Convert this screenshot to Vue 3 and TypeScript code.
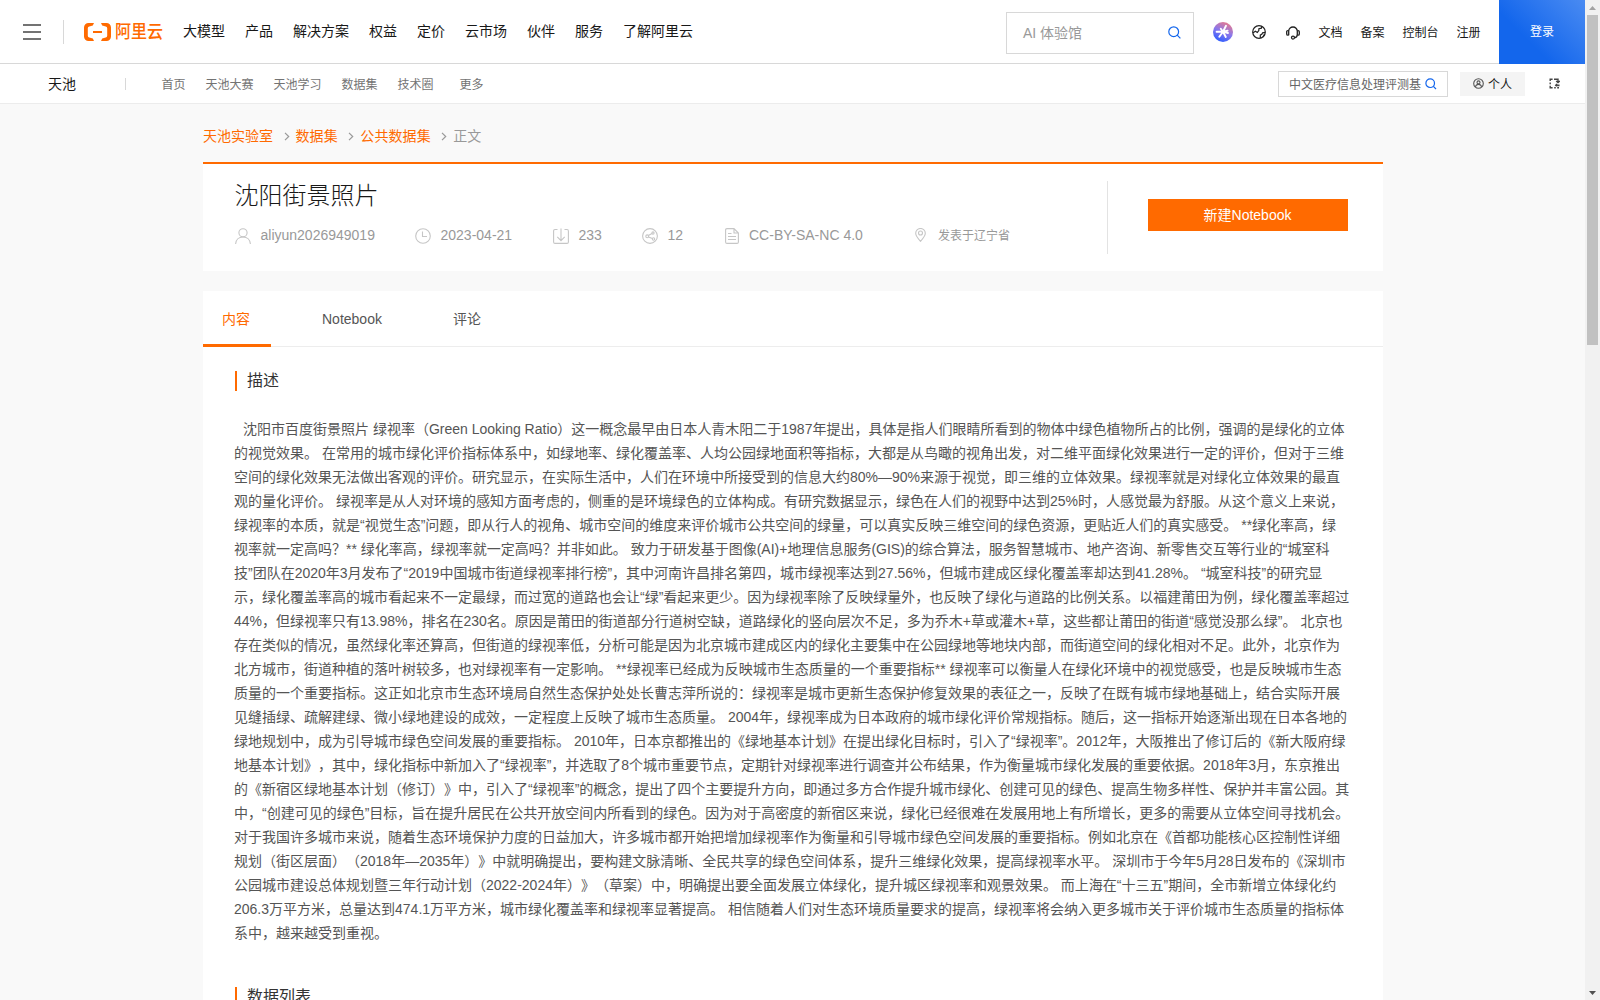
<script setup lang="ts">
const mainNav: string[] = ['大模型', '产品', '解决方案', '权益', '定价', '云市场', '伙伴', '服务', '了解阿里云']
const userNav: string[] = ['文档', '备案', '控制台', '注册']
const subNav: string[] = ['首页', '天池大赛', '天池学习', '数据集', '技术圈', '更多']
const crumbs: string[] = ['天池实验室', '数据集', '公共数据集']

const description: string[] = [
  '沈阳市百度街景照片 绿视率（Green Looking Ratio）这一概念最早由日本人青木阳二于1987年提出，具体是指人们眼睛所看到的物体中绿色植物所占的比例，强调的是绿化的立体',
  '的视觉效果。 在常用的城市绿化评价指标体系中，如绿地率、绿化覆盖率、人均公园绿地面积等指标，大都是从鸟瞰的视角出发，对二维平面绿化效果进行一定的评价，但对于三维',
  '空间的绿化效果无法做出客观的评价。研究显示，在实际生活中，人们在环境中所接受到的信息大约80%—90%来源于视觉，即三维的立体效果。绿视率就是对绿化立体效果的最直',
  '观的量化评价。 绿视率是从人对环境的感知方面考虑的，侧重的是环境绿色的立体构成。有研究数据显示，绿色在人们的视野中达到25%时，人感觉最为舒服。从这个意义上来说，',
  '绿视率的本质，就是“视觉生态”问题，即从行人的视角、城市空间的维度来评价城市公共空间的绿量，可以真实反映三维空间的绿色资源，更贴近人们的真实感受。 **绿化率高，绿',
  '视率就一定高吗？** 绿化率高，绿视率就一定高吗？并非如此。 致力于研发基于图像(AI)+地理信息服务(GIS)的综合算法，服务智慧城市、地产咨询、新零售交互等行业的“城室科',
  '技”团队在2020年3月发布了“2019中国城市街道绿视率排行榜”，其中河南许昌排名第四，城市绿视率达到27.56%，但城市建成区绿化覆盖率却达到41.28%。 “城室科技”的研究显',
  '示，绿化覆盖率高的城市看起来不一定最绿，而过宽的道路也会让“绿”看起来更少。因为绿视率除了反映绿量外，也反映了绿化与道路的比例关系。以福建莆田为例，绿化覆盖率超过',
  '44%，但绿视率只有13.98%，排名在230名。原因是莆田的街道部分行道树空缺，道路绿化的竖向层次不足，多为乔木+草或灌木+草，这些都让莆田的街道“感觉没那么绿”。 北京也',
  '存在类似的情况，虽然绿化率还算高，但街道的绿视率低，分析可能是因为北京城市建成区内的绿化主要集中在公园绿地等地块内部，而街道空间的绿化相对不足。此外，北京作为',
  '北方城市，街道种植的落叶树较多，也对绿视率有一定影响。 **绿视率已经成为反映城市生态质量的一个重要指标** 绿视率可以衡量人在绿化环境中的视觉感受，也是反映城市生态',
  '质量的一个重要指标。这正如北京市生态环境局自然生态保护处处长曹志萍所说的：绿视率是城市更新生态保护修复效果的表征之一，反映了在既有城市绿地基础上，结合实际开展',
  '见缝插绿、疏解建绿、微小绿地建设的成效，一定程度上反映了城市生态质量。 2004年，绿视率成为日本政府的城市绿化评价常规指标。随后，这一指标开始逐渐出现在日本各地的',
  '绿地规划中，成为引导城市绿色空间发展的重要指标。 2010年，日本京都推出的《绿地基本计划》在提出绿化目标时，引入了“绿视率”。2012年，大阪推出了修订后的《新大阪府绿',
  '地基本计划》，其中，绿化指标中新加入了“绿视率”，并选取了8个城市重要节点，定期针对绿视率进行调查并公布结果，作为衡量城市绿化发展的重要依据。2018年3月，东京推出',
  '的《新宿区绿地基本计划（修订）》中，引入了“绿视率”的概念，提出了四个主要提升方向，即通过多方合作提升城市绿化、创建可见的绿色、提高生物多样性、保护并丰富公园。其',
  '中，“创建可见的绿色”目标，旨在提升居民在公共开放空间内所看到的绿色。因为对于高密度的新宿区来说，绿化已经很难在发展用地上有所增长，更多的需要从立体空间寻找机会。',
  '对于我国许多城市来说，随着生态环境保护力度的日益加大，许多城市都开始把增加绿视率作为衡量和引导城市绿色空间发展的重要指标。例如北京在《首都功能核心区控制性详细',
  '规划（街区层面）（2018年—2035年）》中就明确提出，要构建文脉清晰、全民共享的绿色空间体系，提升三维绿化效果，提高绿视率水平。 深圳市于今年5月28日发布的《深圳市',
  '公园城市建设总体规划暨三年行动计划（2022-2024年）》（草案）中，明确提出要全面发展立体绿化，提升城区绿视率和观景效果。 而上海在“十三五”期间，全市新增立体绿化约',
  '206.3万平方米，总量达到474.1万平方米，城市绿化覆盖率和绿视率显著提高。 相信随着人们对生态环境质量要求的提高，绿视率将会纳入更多城市关于评价城市生态质量的指标体',
  '系中，越来越受到重视。',
]
</script>

<template>
  <div class="window">
    <div class="page">
      <header class="topbar">
        <div class="burger"><i></i><i></i><i></i></div>
        <span class="topbar-line"></span>
        <div class="logo">
          <svg width="30" height="18" viewBox="0 0 30 18" fill="#ff6a00">
            <path d="M11 0H5.5A4.5 4.5 0 0 0 1 4.500V13.500A4.500 4.500 0 0 0 5.500 18H11L9.800 15.400 6.300 14.500A1.900 1.900 0 0 1 4.800 12.700V5.300A1.900 1.900 0 0 1 6.300 3.500L9.800 2.600Z" />
            <path d="M18 0h5.500A4.500 4.500 0 0 1 28 4.500v9A4.500 4.500 0 0 1 23.500 18H18l1.200-2.600 3.500-.9a1.900 1.900 0 0 0 1.500-1.800V5.300a1.900 1.900 0 0 0-1.500-1.800l-3.500-.9Z" />
            <path d="M10 8h9v2h-9z" />
          </svg>
          <b>阿里云</b>
        </div>
        <nav class="main-nav">
          <a v-for="n in mainNav" :key="n">{{ n }}</a>
        </nav>
        <div class="search">
          <span>AI 体验馆</span>
          <svg width="13" height="13" viewBox="0 0 13 13" fill="none" stroke="#1366ec" stroke-width="1.2">
            <circle cx="5.700" cy="5.700" r="4.900" />
            <path d="M9.200 9.200 12.400 12.400" />
          </svg>
        </div>
        <svg class="ai" width="20" height="20" viewBox="0 0 20 20">
          <defs>
            <linearGradient id="aiFill" x1="0.3" y1="1" x2="0.75" y2="0">
              <stop offset="0" stop-color="#2a5cff" />
              <stop offset="0.5" stop-color="#8a78ec" />
              <stop offset="1" stop-color="#ec7a88" />
            </linearGradient>
          </defs>
          <circle cx="10" cy="10" r="10" fill="url(#aiFill)" />
          <path d="M10 9.700 13 3.800M10 9.700H3.600M10 9.700 6.300 14.700M10 9.700 12.800 15M10 9.700 15 11M10 9.700 7.800 6.800M10 9.700 14.600 8.600" stroke="#fff" stroke-width="1.900" stroke-linecap="round" />
        </svg>
        <svg class="globe" width="14" height="14" viewBox="0 0 14 14" fill="none" stroke="#222" stroke-width="1.200">
          <circle cx="7" cy="7" r="6.300" />
          <path d="M.8 7.900 3.400 6.200 5.300 7.400 6.800 5.500 6.900 3.700 9.400 3.200 9.800 1.200M8.300 12.900V10.200L10 9.100 10.600 7.800 13.200 7.300M11 12 12.300 9.500" />
        </svg>
        <svg class="headset" width="14" height="14" viewBox="0 0 14 14" fill="none" stroke="#222" stroke-width="1.300">
          <path d="M2.700 9.300V5.300A4.300 4.300 0 0 1 11.300 5.300V8.500C11.300 10.600 9.800 11.600 8.500 11.800" />
          <path d="M2.700 4.600H1.900Q.7 4.600.7 5.800V8Q.7 9.200 1.900 9.200H2.700M11.300 4.600h.8q1.200 0 1.200 1.200V8q0 1.200-1.200 1.200h-.8" />
          <circle cx="7" cy="11.600" r="1.500" />
        </svg>
        <nav class="user-nav">
          <a v-for="n in userNav" :key="n">{{ n }}</a>
        </nav>
        <a class="login">登录</a>
      </header>

      <div class="subbar">
        <span class="brand">天池</span>
        <span class="sub-line"></span>
        <nav class="sub-nav">
          <a v-for="n in subNav" :key="n">{{ n }}</a>
        </nav>
        <div class="sub-search">
          <span>中文医疗信息处理评测基</span>
          <svg width="12" height="12" viewBox="0 0 12 12" fill="none" stroke="#1366ec" stroke-width="1.200">
            <circle cx="5.200" cy="5.200" r="4.300" />
            <path d="M8.400 8.400 11 11" />
          </svg>
        </div>
        <div class="personal">
          <svg width="11" height="11" viewBox="0 0 11 11" fill="none" stroke="#555" stroke-width="1.100">
            <circle cx="5.500" cy="5.500" r="4.800" />
            <circle cx="5.500" cy="4.400" r="1.500" />
            <path d="M2.400 8.900C2.800 7.200 4 6.400 5.500 6.400S8.200 7.200 8.600 8.900" />
          </svg>
          <span>个人</span>
        </div>
        <svg class="switch" width="11" height="11" viewBox="0 0 11 11" fill="none" stroke="#444" stroke-width="1.400">
          <path d="M3.600 1.200H1.200V3M1.200 4.600V6.200M1.200 7.800V9.800H3.600M5 1.200H9V3.800M7.200 2.900 9 4.600 10.800 2.900M5.200 9.800H6.800M8.200 9.800H10M7.600 8.400V6.800M6.200 7.700 7.600 6.400 9 7.700M9.800 6.600V8.200" />
        </svg>
      </div>

      <main class="content">
        <div class="crumbs">
          <template v-for="c in crumbs" :key="c">
            <a>{{ c }}</a>
            <svg width="6" height="9" viewBox="0 0 6 9" fill="none" stroke="#999" stroke-width="1.200"><path d="M1 .8 4.700 4.500 1 8.200" /></svg>
          </template>
          <span>正文</span>
        </div>

        <section class="hero">
          <div class="hero-info">
            <h1>沈阳街景照片</h1>
            <div class="meta">
              <span class="m-user">
                <svg width="16" height="16" viewBox="0 0 16 16"><circle cx="8" cy="4.800" r="4.100" /><path d="M.6 16C.9 11.900 3.800 9 8 9s7.100 2.900 7.400 7" /></svg>
                aliyun2026949019
              </span>
              <span class="m-date">
                <svg width="16" height="16" viewBox="0 0 16 16"><circle cx="8" cy="8" r="7.300" /><path d="M7.500 3.500V8.500H12" /></svg>
                2023-04-21
              </span>
              <span class="m-down">
                <svg width="16" height="16" viewBox="0 0 16 16"><path d="M4.500 1.500H2Q.6 1.500.6 3V14Q.6 15.400 2 15.400H14Q15.400 15.400 15.400 14V3Q15.400 1.500 14 1.500H11.500M8 .5V12.500M4.300 8.900 8 12.600 11.700 8.900" /></svg>
                233
              </span>
              <span class="m-share">
                <svg width="16" height="16" viewBox="0 0 16 16"><circle cx="8" cy="8" r="7.400" /><circle cx="5.200" cy="8.300" r="1.400" /><circle cx="11" cy="5" r="1.100" /><circle cx="11.500" cy="11" r="1.200" /><path d="M6.400 7.600 10 5.600M6.500 8.900 10.400 10.600" /></svg>
                12
              </span>
              <span class="m-lic">
                <svg width="14" height="16" viewBox="0 0 14 16"><path d="M9 .6H2Q.6.6.6 2V14Q.6 15.400 2 15.400H12Q13.400 15.400 13.400 14V5ZM9 .6V5H13.400M3 5.500H6.500M3 8.500H11M3 11.500H11" /></svg>
                CC-BY-SA-NC 4.0
              </span>
              <span class="m-place">
                <svg width="11" height="14" viewBox="0 0 11 14"><path d="M5.500 13.300C3 10.600.7 7.900.7 5.300a4.800 4.800 0 0 1 9.600 0C10.300 7.900 8 10.600 5.500 13.300Z" /><circle cx="5.500" cy="5" r="2" /></svg>
                <em>发表于辽宁省</em>
              </span>
            </div>
          </div>
          <div class="hero-action">
            <button type="button">新建Notebook</button>
          </div>
        </section>

        <section class="panel">
          <div class="tabs">
            <a class="tab active">内容</a>
            <a class="tab second">Notebook</a>
            <a class="tab third">评论</a>
          </div>
          <h2>描述</h2>
          <div class="desc">
            <p v-for="(line, i) in description" :key="i">{{ line }}</p>
          </div>
          <h2 class="list-title">数据列表</h2>
        </section>
      </main>
    </div>

    <div class="scrollbar">
      <svg width="15" height="15" viewBox="0 0 15 15"><path d="M4 10 7.500 6 11 10Z" fill="#a3a3a3" /></svg>
      <div class="thumb"></div>
      <svg width="15" height="15" viewBox="0 0 15 15"><path d="M4 6 7.500 10 11 6Z" fill="#505050" /></svg>
    </div>
  </div>
</template>

<style>
body {
  margin: 0;
  overflow: hidden;
}
</style>

<style scoped>
.window {
  display: flex;
  width: 1600px;
  height: 1000px;
  overflow: hidden;
  background: #f9f9f9;
  font-family: "Liberation Sans", "Noto Sans CJK SC", sans-serif;
  font-size: 14px;
  color: #181818;
  text-spacing-trim: space-all;
  white-space: nowrap;
}
.window * {
  box-sizing: border-box;
}
svg {
  flex: none;
  display: block;
}
.page {
  width: 1585px;
  height: 1000px;
  overflow: hidden;
}
.topbar {
  display: flex;
  align-items: center;
  height: 64px;
  background: #fff;
  border-bottom: 1px solid #d8d8d8;
}
.burger {
  display: flex;
  flex-direction: column;
  gap: 5px;
  width: 18px;
  margin: 1px 0 0 23px;
}
.burger i {
  height: 2px;
  background: #737373;
}
.topbar-line {
  width: 1px;
  height: 24px;
  margin: 1px 0 0 22px;
  background: #d8d8d8;
}
.logo {
  display: flex;
  align-items: center;
  width: 80px;
  margin: 1px 0 0 19px;
  color: #ff6a00;
}
.logo b {
  margin-left: 2px;
  font-size: 18px;
  line-height: 18px;
  font-weight: 500;
  transform: scaleX(0.89);
  transform-origin: left center;
}
.main-nav {
  display: flex;
  gap: 20px;
  margin-left: 20px;
  padding-bottom: 1px;
  line-height: 20px;
}
.search {
  display: flex;
  justify-content: space-between;
  align-items: center;
  width: 188px;
  height: 42px;
  margin: 3px 0 0 auto;
  padding: 0 12px 2px 16px;
  border: 1px solid #d8d8d8;
  color: #999;
}
.ai {
  margin: 1px 0 0 19px;
}
.globe {
  margin: 1px 0 0 19px;
}
.headset {
  margin: 2px 0 0 20px;
}
.user-nav {
  display: flex;
  gap: 18px;
  margin-left: 18.5px;
  padding-bottom: 1px;
  font-size: 12px;
}
.login {
  width: 86px;
  height: 64px;
  margin: 0 0 -1px 18.5px;
  background: linear-gradient(45deg, #1366ec 35%, #4a8bf2);
  color: #fff;
  font-size: 12px;
  line-height: 65px;
  text-align: center;
}
.subbar {
  display: flex;
  align-items: center;
  height: 40px;
  background: #fff;
  border-bottom: 1px solid #ececec;
}
.brand {
  width: 28px;
  margin-left: 48px;
  padding-bottom: 2px;
}
.sub-line {
  width: 1px;
  height: 12px;
  margin-left: 49px;
  background: #d8d8d8;
}
.sub-nav {
  display: flex;
  gap: 20px;
  margin-left: 35.5px;
  padding-bottom: 1px;
  color: #737373;
  font-size: 12px;
}
.sub-nav a:last-child {
  margin-left: 6px;
}
.sub-search {
  display: flex;
  align-items: center;
  width: 170px;
  height: 26px;
  margin-left: auto;
  padding-left: 10px;
  border: 1px solid #d8d8d8;
  color: #666;
  font-size: 12px;
}
.sub-search span {
  padding-bottom: 1px;
}
.sub-search svg {
  margin-left: 4px;
}
.personal {
  display: flex;
  align-items: center;
  width: 65px;
  height: 24px;
  margin-left: 12px;
  padding-left: 13px;
  background: #f4f4f4;
  font-size: 12px;
}
.personal span {
  margin-left: 4px;
}
.switch {
  margin: 0 25px 0 24px;
}
.content {
  width: 1180px;
  margin-left: 203px;
}
.crumbs {
  display: flex;
  align-items: center;
  height: 58px;
  padding-top: 4px;
  color: #ff6a00;
}
.crumbs svg {
  margin: 3px 6px 0 10.5px;
}
.crumbs a + svg + a {
  letter-spacing: 0.1px;
}
.crumbs span {
  color: #999;
}
.hero {
  display: flex;
  height: 109px;
  background: #fff;
  border-top: 2px solid #ff6a00;
}
.hero-info {
  flex: 1;
  padding: 14px 0 0 32px;
}
h1 {
  margin: 0 0 0 -0.5px;
  font-size: 24px;
  line-height: 36px;
  font-weight: 300;
}
.meta {
  display: flex;
  align-items: center;
  height: 16px;
  margin-top: 13px;
  color: #999;
}
.meta span {
  display: flex;
  align-items: center;
  line-height: 16px;
}
.meta svg {
  margin: 1px 9.5px 0 0;
  fill: none;
  stroke: #c6c6c6;
  stroke-width: 1.1;
}
.m-user { width: 180px; }
.m-date { width: 138px; }
.m-down { width: 89px; }
.m-share { width: 83px; }
.meta .m-lic svg { margin-right: 10px; }
.m-lic { width: 190px; }
.meta .m-place svg {
  margin: 0 12px 0 0;
}
.m-place em {
  padding-top: 1px;
  font-size: 12px;
  font-style: normal;
}
.hero-action {
  width: 276px;
  height: 73px;
  margin-top: 17px;
  padding: 18px 0 0 40px;
  border-left: 1px solid #e3e3e3;
}
button {
  display: block;
  width: 200px;
  height: 32px;
  padding: 0 1px 0 0;
  border: 0;
  background: #ff6a00;
  color: #fff;
  font: inherit;
  line-height: 32px;
}
.panel {
  height: 760px;
  margin-top: 20px;
  background: #fff;
}
.tabs {
  display: flex;
  height: 56px;
  border-bottom: 1px solid #ededed;
  color: #555;
  line-height: 56px;
}
.tab.active {
  width: 68px;
  height: 56px;
  padding-left: 19px;
  border-bottom: 3px solid #ff6a00;
  color: #ff6a00;
}
.tab.second {
  width: 131px;
  margin-left: 51px;
}
h2 {
  height: 20px;
  margin: 24px 0 0 32px;
  padding-left: 10px;
  border-left: 2px solid #ff6a00;
  color: #333;
  font-size: 16px;
  line-height: 19px;
  font-weight: 400;
}
.desc {
  margin: 26px 0 0 31px;
  color: #555;
}
.desc p {
  height: 24px;
  margin: 0;
  line-height: 24px;
}
.desc p:first-child {
  padding-left: 9px;
}
.list-title {
  margin-top: 42px;
}
.scrollbar {
  display: flex;
  flex-direction: column;
  width: 15px;
  height: 1000px;
  background: #f1f1f1;
}
.thumb {
  width: 11px;
  height: 330px;
  margin: 0 2px auto;
  background: #c1c1c1;
}
</style>
